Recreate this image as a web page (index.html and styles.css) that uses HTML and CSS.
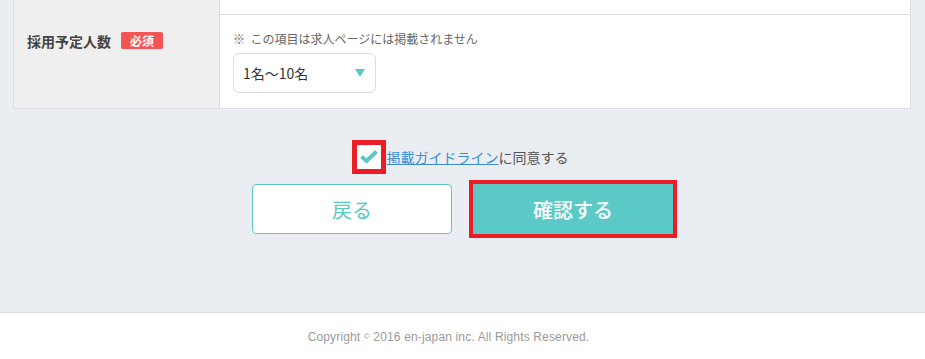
FILE: index.html
```html
<!DOCTYPE html>
<html lang="ja">
<head>
    <meta charset="UTF-8">
    <meta name="viewport" content="width=device-width, initial-scale=1.0">
    <title>求人情報入力</title>
    <link rel="stylesheet" href="styles.css">
</head>
<body>
    <main class="page">
        <div class="form-table">
            <div class="form-row form-row-top">
                <div class="form-label"></div>
                <div class="form-field"></div>
            </div>
            <div class="form-row">
                <div class="form-label">
                    <span class="label-text">採用予定人数</span>
                    <span class="badge">必須</span>
                </div>
                <div class="form-field">
                    <p class="note">※&nbsp; この項目は求人ページには掲載されません</p>
                    <div class="select-box">
                        <span>1名〜10名</span>
                        <span class="arrow"></span>
                    </div>
                </div>
            </div>
        </div>

        <div class="agree">
            <span class="check">
                <svg width="24" height="24" viewBox="0 0 24 24">
                    <path d="M4.5 11.5 L9.5 16 L19.5 6.5" fill="none" stroke="#5bc8c5" stroke-width="4"/>
                </svg>
            </span>
            <a href="#" class="agree-link">掲載ガイドライン</a><span>に同意する</span>
        </div>

        <div class="buttons">
            <button type="button" class="btn btn-back">戻る</button>
            <button type="button" class="btn btn-confirm">確認する</button>
        </div>
    </main>

    <footer class="footer">
        <p>Copyright <small>©</small> 2016 en-japan inc. All Rights Reserved.</p>
    </footer>
</body>
</html>
```

FILE: styles.css
```css
body {
    margin: 0;
    padding: 0;
    background-color: #eaedf2;
    font-family: "Noto Sans CJK JP", "Liberation Sans", sans-serif;
    color: #4a4a4a;
}

.page {
    height: 312px;
    display: flex;
    flex-direction: column;
}

.form-table {
    margin: 0 14px 0 13px;
    border: 1px solid #dcdde0;
    border-top: none;
    background-color: #ffffff;
}

.form-row {
    display: grid;
    grid-template-columns: 206px 1fr;
}

.form-row-top {
    height: 14px;
    border-bottom: 1px solid #dcdde0;
}

.form-label {
    background-color: #efefef;
    border-right: 1px solid #dcdde0;
    padding: 16px 0 0 13px;
    display: flex;
    align-items: flex-start;
}

.form-row-top .form-label {
    padding: 0;
}

.label-text {
    font-size: 14px;
    font-weight: bold;
    line-height: 20px;
    color: #444;
}

.badge {
    margin: 1px 0 0 10px;
    background-color: #f45454;
    color: #ffffff;
    font-size: 12px;
    font-weight: bold;
    line-height: 17px;
    padding: 0 9px;
    border-radius: 2px;
}

.form-field {
    padding: 15px 13px 15px 13px;
}

.note {
    margin: 0 0 5px 0;
    font-size: 12px;
    line-height: 18px;
    color: #666;
}

.select-box {
    height: 38px;
    width: 122px;
    border: 1px solid #dcdde0;
    border-radius: 6px;
    background-color: #ffffff;
    display: flex;
    align-items: center;
    justify-content: space-between;
    padding: 0 10px 0 9px;
    font-size: 14px;
    color: #333;
}

.arrow {
    width: 0;
    height: 0;
    border-left: 5px solid transparent;
    border-right: 5px solid transparent;
    border-top: 8px solid #5bc8c5;
}

.agree {
    margin-top: 31px;
    display: flex;
    justify-content: center;
    align-items: center;
    font-size: 14px;
    color: #555;
    padding-right: 5px;
}

.check {
    width: 24px;
    height: 24px;
    border: 5px solid #ed1c24;
    background-color: #ffffff;
    display: flex;
    margin-right: 1px;
}

.agree-link {
    color: #3b8ed4;
    text-decoration: underline;
}

.buttons {
    margin-top: 10px;
    display: flex;
    justify-content: center;
    gap: 21px;
}

.btn {
    width: 200px;
    height: 50px;
    border-radius: 4px;
    font-family: "Noto Sans CJK JP", sans-serif;
    font-size: 20px;
    cursor: pointer;
}

.btn-back {
    background-color: #ffffff;
    border: 1px solid #5bc8c5;
    color: #5bc8c5;
}

.btn-confirm {
    background-color: #5bcac7;
    border: 1px solid #5bcac7;
    color: #ffffff;
    font-weight: 500;
    border-radius: 0;
    outline: 4px solid #ed1c24;
}

.footer {
    border-top: 1px solid #dcdde0;
    background-color: #ffffff;
    height: 46px;
    display: flex;
    justify-content: center;
    align-items: center;
    padding-right: 28px;
}

.footer p {
    margin: 2px 0 0 0;
    font-family: "Liberation Sans", Arial, sans-serif;
    font-size: 12px;
    letter-spacing: 0.15px;
    color: #9a9a9a;
}

.footer small {
    font-size: 8px;
    vertical-align: 2px;
}
```
